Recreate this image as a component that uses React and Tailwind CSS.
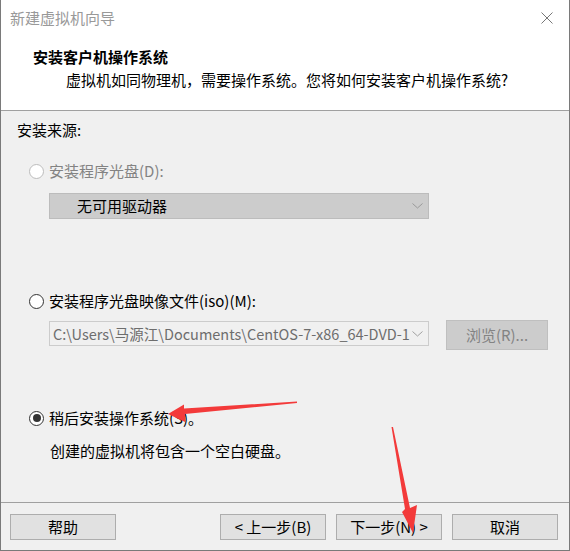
import React from 'react';

const font = { fontFamily: '"Noto Sans CJK SC", "Noto Sans", sans-serif' };

const Radio = ({ checked, disabled }) => (
  <span
    className={`w-[15px] h-[15px] rounded-full border flex items-center justify-center shrink-0 ${
      disabled ? 'border-[#bcbcbc] bg-white' : 'border-[#333333] bg-white'
    }`}
  >
    {checked && <span className="w-[8px] h-[8px] rounded-full bg-[#333333]" />}
  </span>
);

const Chevron = ({ color }) => (
  <svg width="11" height="6" viewBox="0 0 11 6" className="shrink-0">
    <path d="M0.5 0.5 L5.5 5 L10.5 0.5" fill="none" stroke={color} strokeWidth="1" />
  </svg>
);

const Button = ({ children }) => (
  <div className="w-[106px] h-[26px] border border-[#adadad] bg-[#e1e1e1] flex items-center justify-center text-[15px] leading-5 text-black">
    {children}
  </div>
);

export default function App() {
  return (
    <div className="relative w-[570px] h-[551px] bg-[#f0f0f0] flex flex-col border-l border-r border-b border-[#7a7a7a] overflow-hidden" style={font}>
      {/* header */}
      <div className="h-[111px] bg-white border-b border-[#a0a0a0] shrink-0">
        <div className="h-[36px] flex items-center justify-between pl-[9px] pr-[16px]">
          <span className="text-[15px] leading-5 text-[#999999]">新建虚拟机向导</span>
          <svg width="12" height="12" viewBox="0 0 12 12">
            <path d="M0.5 0.5 L11.5 11.5 M11.5 0.5 L0.5 11.5" stroke="#777" strokeWidth="1" />
          </svg>
        </div>
        <div className="mt-[11px] ml-[32px] text-[15px] leading-5 font-bold text-black">安装客户机操作系统</div>
        <div className="mt-[3px] ml-[65px] text-[15px] leading-5 text-black">虚拟机如同物理机，需要操作系统。您将如何安装客户机操作系统?</div>
      </div>

      {/* body */}
      <div className="flex-1 flex flex-col text-[15px] leading-5 text-black">
        <div className="mt-[9px] ml-[16px]">安装来源:</div>

        <div className="mt-[21px] ml-[28px] flex items-center gap-[5px] text-[#838383]">
          <Radio disabled />
          <span>安装程序光盘(D):</span>
        </div>
        <div className="mt-[12px] ml-[48px] w-[380px] h-[26px] bg-[#cccccc] border border-[#bcbcbc] flex items-center justify-between pl-[27px] pr-[5px]">
          <span>无可用驱动器</span>
          <Chevron color="#999999" />
        </div>

        <div className="mt-[72px] ml-[28px] flex items-center gap-[5px]">
          <Radio />
          <span>安装程序光盘映像文件(iso)(M):</span>
        </div>
        <div className="mt-[9px] ml-[48px] flex items-start gap-[17px]">
          <div className="mt-[1px] w-[380px] h-[25px] bg-[#f0f0f0] border border-[#cccccc] flex items-center justify-between pl-[3px] pr-[5px]">
            <span className="whitespace-nowrap text-[#6d6d6d] text-[14.5px]">C:\Users\马源江\Documents\CentOS-7-x86_64-DVD-1</span>
            <Chevron color="#a0a0a0" />
          </div>
          <div className="w-[102px] h-[30px] bg-[#cccccc] border border-[#bfbfbf] flex items-center justify-center text-[#838383]">
            浏览(R)...
          </div>
        </div>

        <div className="mt-[58px] ml-[28px] flex items-center gap-[5px]">
          <Radio checked />
          <span>稍后安装操作系统(S)。</span>
        </div>
        <div className="mt-[13px] ml-[49px]">创建的虚拟机将包含一个空白硬盘。</div>
      </div>

      {/* footer */}
      <div className="h-[48px] shrink-0 border-t border-[#a0a0a0] pt-[11px] pl-[9px] flex items-start">
        <Button>帮助</Button>
        <div className="ml-[104px] flex gap-[10px]">
          <Button>&lt; 上一步(B)</Button>
          <Button>下一步(N) &gt;</Button>
          <Button>取消</Button>
        </div>
      </div>

      {/* annotation arrows */}
      <svg className="absolute left-[-1px] top-0 pointer-events-none" width="570" height="551" viewBox="0 0 570 551">
        <polygon points="168,414 184,404.5 184,408.5 297,401.5 297,403 185,414 185,422" fill="#f33a3a" />
        <polygon points="391.5,427 393,427 410,508 417,505 413,533 402,512 405,509" fill="#f33a3a" />
      </svg>
    </div>
  );
}
